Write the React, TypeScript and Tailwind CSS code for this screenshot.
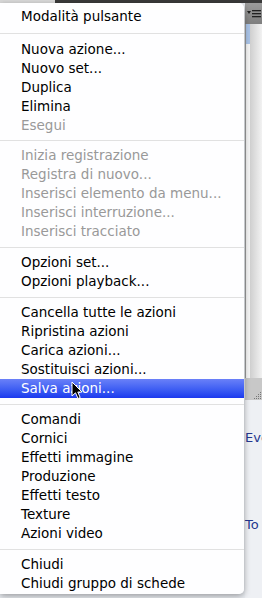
import React from 'react';

type Item = { label: string; disabled?: boolean; active?: boolean };

const groups: Item[][] = [
	[{ label: 'Modalità pulsante' }],
	[
		{ label: 'Nuova azione...' },
		{ label: 'Nuovo set...' },
		{ label: 'Duplica' },
		{ label: 'Elimina' },
		{ label: 'Esegui', disabled: true },
	],
	[
		{ label: 'Inizia registrazione', disabled: true },
		{ label: 'Registra di nuovo...', disabled: true },
		{ label: 'Inserisci elemento da menu...', disabled: true },
		{ label: 'Inserisci interruzione...', disabled: true },
		{ label: 'Inserisci tracciato', disabled: true },
	],
	[{ label: 'Opzioni set...' }, { label: 'Opzioni playback...' }],
	[
		{ label: 'Cancella tutte le azioni' },
		{ label: 'Ripristina azioni' },
		{ label: 'Carica azioni...' },
		{ label: 'Sostituisci azioni...' },
		{ label: 'Salva azioni...', active: true },
	],
	[
		{ label: 'Comandi' },
		{ label: 'Cornici' },
		{ label: 'Effetti immagine' },
		{ label: 'Produzione' },
		{ label: 'Effetti testo' },
		{ label: 'Texture' },
		{ label: 'Azioni video' },
	],
	[{ label: 'Chiudi' }, { label: 'Chiudi gruppo di schede' }],
];

// heights of the separator after each group
const sepHeights = ['h-[14px]', 'h-[11px]', 'h-[12px]', 'h-[12px]', 'h-[12px]', 'h-[12px]'];

function Cursor() {
	return (
		<svg width="12" height="19" viewBox="0 0 12 19" className="absolute left-[71px] top-[2px]">
			<path
				d="M1 1 L1 15 L4.5 11.8 L7 17.5 L9.2 16.5 L6.8 11 L11 11 Z"
				fill="#000"
				stroke="#fff"
				strokeWidth="1"
				strokeLinejoin="round"
			/>
		</svg>
	);
}

function MenuRow({ item }: { item: Item }) {
	if (item.active) {
		return (
			<div className="relative h-[19px] flex items-center pl-[21px] text-white bg-gradient-to-b from-[#6a80f8] to-[#1c38ee]">
				{item.label}
				<Cursor />
			</div>
		);
	}
	return (
		<div className={`h-[19px] flex items-center pl-[21px] ${item.disabled ? 'text-[#999]' : 'text-black'}`}>
			{item.label}
		</div>
	);
}

export default function App() {
	return (
		<div
			className="relative w-[262px] h-[598px] overflow-hidden bg-[#e9ecf1]"
			style={{ fontFamily: '"DejaVu Sans", "Noto Sans", sans-serif' }}
		>
			{/* window behind the menu */}
			<div className="flex h-[3px]">
				<div className="w-[55px] bg-[#d9d9d9]" />
				<div className="flex-1 bg-[#3a3a3a]" />
			</div>
			<div className="flex">
				<div className="w-[245px]" />
				<div className="w-[17px] flex flex-col h-[595px]">
					<div className="h-[21px] bg-gradient-to-b from-[#9c9c9c] to-[#7e7e7e] flex items-center justify-center">
						<svg width="14" height="10" viewBox="0 0 14 10">
							<path d="M0 2 L4 2 L2 5 Z" fill="#222" />
							<rect x="5" y="1" width="9" height="1.3" fill="#222" />
							<rect x="5" y="4" width="9" height="1.3" fill="#222" />
							<rect x="5" y="7" width="9" height="1.3" fill="#222" />
						</svg>
					</div>
					<div className="flex h-[354px]">
						<div className="w-[1px] bg-[#9a9a9a]" />
						<div className="w-[4px] flex flex-col">
							<div className="h-[20px] bg-[#a9c3e6]" />
							<div className="flex-1 bg-[#f4f4f4]" />
						</div>
						<div className="flex-1 bg-gradient-to-r from-[#cfcfcf] to-[#f2f2f2]" />
					</div>
					<div className="h-[22px] bg-[#c8c8c8] flex items-end justify-end">
						<svg width="10" height="10" viewBox="0 0 10 10">
							<g fill="#777">
								<rect x="8" y="2" width="1" height="1" />
								<rect x="6" y="4" width="1" height="1" />
								<rect x="8" y="4" width="1" height="1" />
								<rect x="4" y="6" width="1" height="1" />
								<rect x="6" y="6" width="1" height="1" />
								<rect x="8" y="6" width="1" height="1" />
								<rect x="2" y="8" width="1" height="1" />
								<rect x="4" y="8" width="1" height="1" />
								<rect x="6" y="8" width="1" height="1" />
								<rect x="8" y="8" width="1" height="1" />
							</g>
						</svg>
					</div>
					<div className="flex-1 bg-[#eef0f4] text-[13px] text-[#24378f] whitespace-nowrap">
						<div className="pt-[30px] leading-[16px]">Eve</div>
						<div className="pt-[71px] leading-[16px]">To</div>
					</div>
				</div>
			</div>

			{/* popup menu */}
			<div className="absolute left-0 top-[3px] w-[244px] h-[591px] bg-white/95 rounded-r-[5px] shadow-[0_2px_6px_rgba(0,0,0,0.35)] pt-[4px] text-[13.5px] leading-[19px] whitespace-nowrap">
				{groups.map((group, gi) => (
					<div key={gi}>
						{group.map((item) => (
							<MenuRow key={item.label} item={item} />
						))}
						{gi < groups.length - 1 && (
							<div className={`${sepHeights[gi]} flex items-center`}>
								<div className="h-[1px] w-full bg-[#e1e1e1]" />
							</div>
						)}
					</div>
				))}
			</div>
		</div>
	);
}
